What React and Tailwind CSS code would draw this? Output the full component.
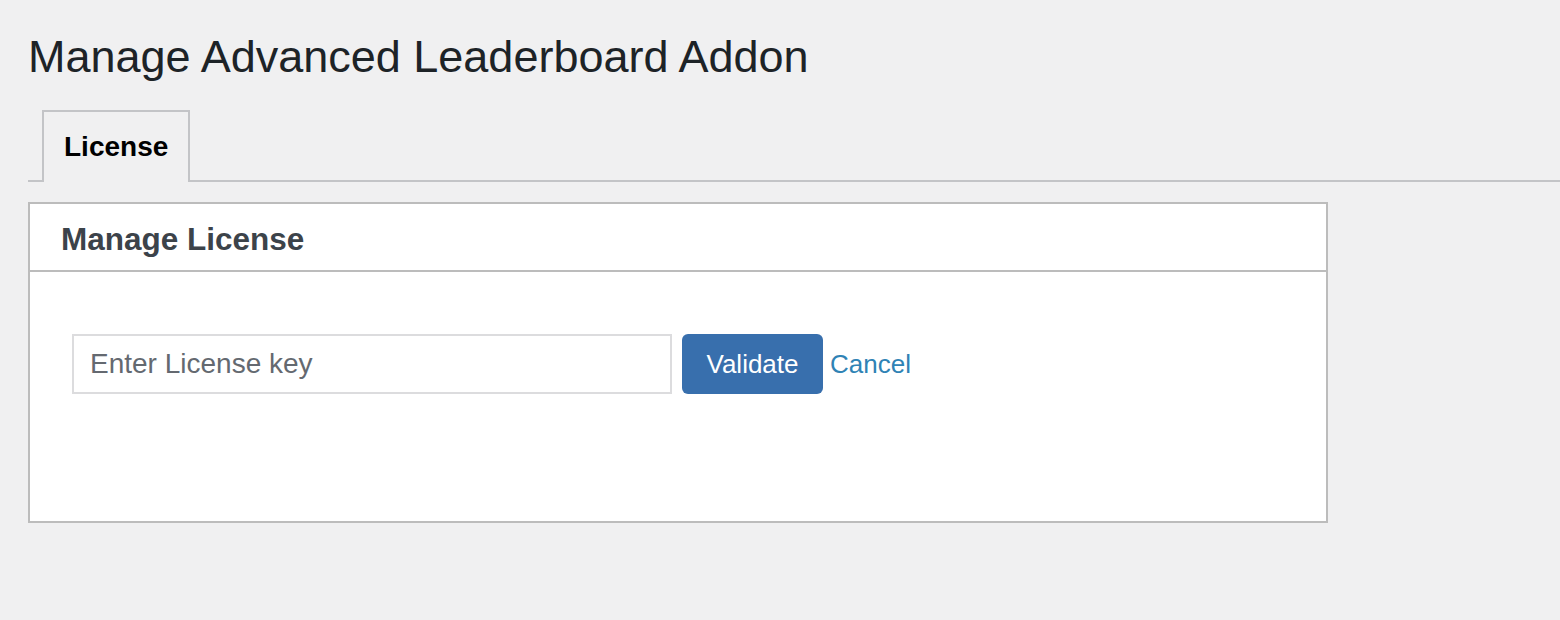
import React, { useState } from 'react';

const App = () => {
    const [licenseKey, setLicenseKey] = useState('');

    return (
        <div className="min-h-[620px] bg-[#f0f0f1] pl-[28px] pt-[31px] font-['Liberation_Sans',Arial,sans-serif]">
            <h1 className="text-[45px] leading-[52px] font-normal text-[#1d2327]">
                Manage Advanced Leaderboard Addon
            </h1>

            <nav className="mt-[27px] flex border-b-2 border-[#c3c4c7]">
                <button className="ml-[14px] -mb-[2px] h-[72px] border-2 border-b-0 border-[#c3c4c7] bg-[#f0f0f1] px-[20px] text-[28px] leading-[68px] font-bold text-black">
                    License
                </button>
            </nav>

            <div className="mt-[20px] w-[1300px] border-2 border-[#bcbcbc] bg-white">
                <div className="h-[68px] border-b-2 border-[#bcbcbc] pl-[31px] pt-[5px]">
                    <h2 className="text-[31.5px] leading-[60px] font-bold text-[#3c434a]">Manage License</h2>
                </div>
                <div className="flex items-center pl-[42px] pt-[62px] pb-[127px]">
                    <input
                        type="text"
                        value={licenseKey}
                        onChange={(e) => setLicenseKey(e.target.value)}
                        placeholder="Enter License key"
                        className="h-[60px] w-[600px] border-2 border-[#dcdcde] bg-white px-[16px] text-[28px] text-[#2c3338] outline-none placeholder:text-[#646970]"
                    />
                    <button className="ml-[10px] h-[60px] w-[141px] rounded-[6px] bg-[#386fad] text-[26px] text-white">
                        Validate
                    </button>
                    <a href="#" className="ml-[7px] text-[26px] text-[#2f83b5]">
                        Cancel
                    </a>
                </div>
            </div>
        </div>
    );
};

export default App;
